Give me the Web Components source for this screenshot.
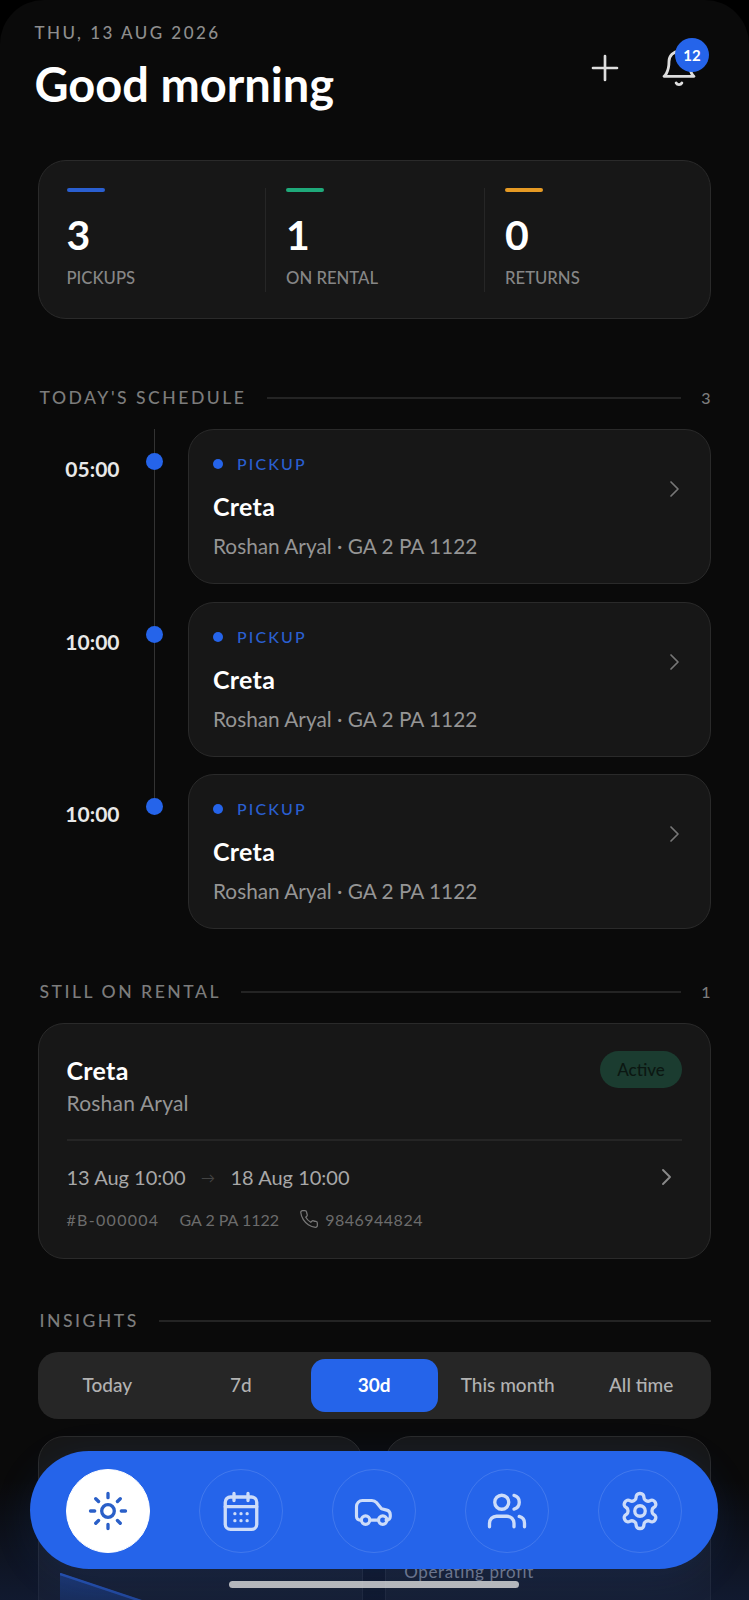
<!DOCTYPE html>
<html lang="en">
<head>
<meta charset="utf-8">
<title>Today</title>
<style>
  html, body { margin: 0; background: #000; }
  body { height: 1600px; overflow: hidden; font-family: Lato, "Noto Sans", sans-serif; }
</style>
</head>
<body>
<app-screen>
  <day-header date="THU, 13 AUG 2026" title="Good morning" count="12"></day-header>

  <stat-strip>
    <stat-item value="3" label="PICKUPS" color="#2a5fd0"></stat-item>
    <stat-item value="1" label="ON RENTAL" color="#1fa97a"></stat-item>
    <stat-item value="0" label="RETURNS" color="#e59a24"></stat-item>
  </stat-strip>

  <section-head class="first" count="3">TODAY'S SCHEDULE</section-head>
  <schedule-row time="05:00" car="Creta" detail="Roshan Aryal · GA 2 PA 1122"></schedule-row>
  <schedule-row time="10:00" car="Creta" detail="Roshan Aryal · GA 2 PA 1122"></schedule-row>
  <schedule-row time="10:00" car="Creta" detail="Roshan Aryal · GA 2 PA 1122" last></schedule-row>

  <section-head count="1">STILL ON RENTAL</section-head>
  <rental-card></rental-card>

  <section-head>INSIGHTS</section-head>
  <range-tabs>
    <range-tab>Today</range-tab>
    <range-tab>7d</range-tab>
    <range-tab active>30d</range-tab>
    <range-tab>This month</range-tab>
    <range-tab>All time</range-tab>
  </range-tabs>

  <insight-grid>
    <insight-card chart></insight-card>
    <insight-card label="Operating profit"></insight-card>
  </insight-grid>

  <bottom-nav slot="overlay">
    <nav-item icon="sun" active></nav-item>
    <nav-item icon="calendar"></nav-item>
    <nav-item icon="car"></nav-item>
    <nav-item icon="users"></nav-item>
    <nav-item icon="gear"></nav-item>
  </bottom-nav>
</app-screen>

<script>
const icons = {
  plus: '<path d="M12 3v18M3 12h18"/>',
  bell: '<path d="M6 8a6 6 0 0 1 12 0c0 7 3 9 3 9H3s3-2 3-9"/><path d="M10.3 21a1.94 1.94 0 0 0 3.4 0"/>',
  chevron: '<path d="M9 5l7 7-7 7"/>',
  phone: '<path d="M22 16.92v3a2 2 0 0 1-2.18 2 19.79 19.79 0 0 1-8.63-3.07 19.5 19.5 0 0 1-6-6 19.79 19.79 0 0 1-3.07-8.67A2 2 0 0 1 4.11 2h3a2 2 0 0 1 2 1.72 12.84 12.84 0 0 0 .7 2.81 2 2 0 0 1-.45 2.11L8.09 9.91a16 16 0 0 0 6 6l1.27-1.27a2 2 0 0 1 2.11-.45 12.84 12.84 0 0 0 2.81.7A2 2 0 0 1 22 16.92z"/>',
  sun: '<circle cx="12" cy="12" r="3.6"/><path d="M12 2v2.4M12 19.6V22M2 12h2.4M19.6 12H22M5 5l1.6 1.6M17.4 17.4L19 19M5 19l1.6-1.6M17.4 6.6L19 5"/>',
  calendar: '<rect x="3" y="4" width="18" height="18.5" rx="3"/><path d="M3 9.5h18M8 2v4M16 2v4"/><path d="M8.5 13.5h.01M12 13.5h.01M15.5 13.5h.01M8.5 17.5h.01M12 17.5h.01M15.5 17.5h.01"/>',
  car: '<path d="M4.6 17.2H4a2 2 0 0 1-2-2V9.4a3.4 3.4 0 0 1 3.4-3.4h5.4a3.4 3.4 0 0 1 2.6 1.2l2.9 3.5 3 .8a2.7 2.7 0 0 1 2 2.6v1.1a2 2 0 0 1-2 2h-.4"/><path d="M9.8 17.2h4.6"/><circle cx="7.2" cy="17.2" r="2.4"/><circle cx="17" cy="17.2" r="2.4"/>',
  users: '<path d="M16 21v-2a4 4 0 0 0-4-4H6a4 4 0 0 0-4 4v2"/><circle cx="9" cy="7" r="4"/><path d="M22 21v-2a4 4 0 0 0-3-3.87"/><path d="M16 3.13a4 4 0 0 1 0 7.75"/>',
  gear: '<path d="M12.22 2h-.44a2 2 0 0 0-2 2v.18a2 2 0 0 1-1 1.73l-.43.25a2 2 0 0 1-2 0l-.15-.08a2 2 0 0 0-2.73.73l-.22.38a2 2 0 0 0 .73 2.73l.15.1a2 2 0 0 1 1 1.72v.51a2 2 0 0 1-1 1.74l-.15.09a2 2 0 0 0-.73 2.73l.22.38a2 2 0 0 0 2.73.73l.15-.08a2 2 0 0 1 2 0l.43.25a2 2 0 0 1 1 1.73V20a2 2 0 0 0 2 2h.44a2 2 0 0 0 2-2v-.18a2 2 0 0 1 1-1.73l.43-.25a2 2 0 0 1 2 0l.15.08a2 2 0 0 0 2.73-.73l.22-.39a2 2 0 0 0-.73-2.73l-.15-.08a2 2 0 0 1-1-1.74v-.5a2 2 0 0 1 1-1.74l.15-.09a2 2 0 0 0 .73-2.73l-.22-.38a2 2 0 0 0-2.73-.73l-.15.08a2 2 0 0 1-2 0l-.43-.25a2 2 0 0 1-1-1.73V4a2 2 0 0 0-2-2z"/><circle cx="12" cy="12" r="3"/>',
};

// small base so each element only writes its own markup
class Base extends HTMLElement {
  constructor() {
    super();
    this.attachShadow({mode: 'open'});
  }
  connectedCallback() {
    this.render();
  }
  attr(name) {
    return this.getAttribute(name) || '';
  }
}

class UiIcon extends Base {
  render() {
    const size = this.attr('size') || 24;
    const sw = this.attr('stroke') || 2;
    this.shadowRoot.innerHTML = `
      <style>
        :host { display: inline-flex; flex: none; }
        svg { display: block; }
      </style>
      <svg width="${size}" height="${size}" viewBox="0 0 24 24" fill="none" stroke="currentColor"
        stroke-width="${sw}" stroke-linecap="round" stroke-linejoin="round">${icons[this.attr('name')]}</svg>`;
  }
}

class AppScreen extends Base {
  render() {
    this.shadowRoot.innerHTML = `
      <style>
        :host {
          display: block;
          position: relative;
          height: 1600px;
          overflow: hidden;
          background: #0a0a0a;
          border-radius: 44px 44px 0 0;
          box-sizing: border-box;
          padding: 0 38.5px 0 38px;
        }
        .glow {
          position: absolute;
          left: 0;
          right: 0;
          bottom: 0;
          height: 120px;
          pointer-events: none;
          background: linear-gradient(to bottom, rgba(10,10,10,0), rgba(22,38,78,.55));
        }
        .bar {
          position: absolute;
          left: 229px;
          top: 1581px;
          width: 290px;
          height: 7px;
          border-radius: 4px;
          background: rgba(225,225,225,.78);
        }
      </style>
      <slot></slot>
      <div class="glow"></div>
      <slot name="overlay"></slot>
      <div class="bar"></div>`;
  }
}

class DayHeader extends Base {
  render() {
    this.shadowRoot.innerHTML = `
      <style>
        :host {
          display: flex;
          justify-content: space-between;
          height: 112px;
          margin-left: -3.5px;
          padding-right: 11.5px;
        }
        .date { margin-top: 22px; font-size: 17px; line-height: 22px; letter-spacing: 2.45px; font-weight: 500; color: #8e8e8e; }
        h1 { margin: 12px 0 0; font-size: 47px; line-height: 56px; font-weight: 700; color: #fff; }
        .actions { display: flex; gap: 34px; margin-top: 48px; height: 40px; color: #dedede; }
        .btn { position: relative; width: 40px; height: 40px; display: flex; align-items: center; justify-content: center; }
        .badge {
          position: absolute;
          left: 16px;
          top: -10px;
          width: 34px;
          height: 34px;
          border-radius: 50%;
          background: #2564ea;
          color: #fff;
          font-size: 15px;
          font-weight: 700;
          line-height: 34px;
          text-align: center;
        }
      </style>
      <div>
        <div class="date">${this.attr('date')}</div>
        <h1>${this.attr('title')}</h1>
      </div>
      <div class="actions">
        <div class="btn"><ui-icon name="plus" size="32" stroke="2"></ui-icon></div>
        <div class="btn"><ui-icon name="bell" size="40" stroke="1.7"></ui-icon><span class="badge">${this.attr('count')}</span></div>
      </div>`;
  }
}

class StatStrip extends Base {
  render() {
    this.shadowRoot.innerHTML = `
      <style>
        :host {
          display: grid;
          grid-template-columns: 198.5px 219px 1fr;
          margin-top: 48px;
          padding: 27px 27px 26px 27.5px;
          height: 159px;
          box-sizing: border-box;
          background: #171717;
          border: 1px solid #2a2a2a;
          border-radius: 28px;
        }
      </style>
      <slot></slot>`;
  }
}

class StatItem extends Base {
  render() {
    this.shadowRoot.innerHTML = `
      <style>
        :host { display: block; }
        :host(:not(:first-child)) { border-left: 1px solid #262626; padding-left: 20px; }
        .bar { width: 38px; height: 3.5px; border-radius: 2px; background: ${this.attr('color')}; }
        .value { margin-top: 21px; font-size: 41px; line-height: 44px; font-weight: 700; color: #fff; }
        .label { margin-top: 11px; font-size: 16.7px; line-height: 20px; font-weight: 500; color: #868686; }
      </style>
      <div class="bar"></div>
      <div class="value">${this.attr('value')}</div>
      <div class="label">${this.attr('label')}</div>`;
  }
}

class SectionHead extends Base {
  render() {
    const count = this.attr('count');
    this.shadowRoot.innerHTML = `
      <style>
        :host {
          display: flex;
          align-items: center;
          gap: 20px;
          margin: 51px 0 20px 1.5px;
          font-size: 17.6px;
          line-height: 22px;
          letter-spacing: 2.5px;
          font-weight: 500;
          color: #7c7c7c;
        }
        :host(.first) { margin-top: 68px; }
        .line { flex: 1; height: 2px; background: #242424; }
        .count { font-size: 16px; letter-spacing: 0; }
      </style>
      <span><slot></slot></span>
      <span class="line"></span>
      ${count ? `<span class="count">${count}</span>` : ''}`;
  }
}

class ScheduleRow extends Base {
  render() {
    const tail = this.hasAttribute('last') ? '' : '<div class="fill"></div>';
    this.shadowRoot.innerHTML = `
      <style>
        :host { display: flex; }
        .time {
          width: 81.5px;
          padding-top: 27px;
          text-align: right;
          font-size: 21px;
          line-height: 26px;
          font-weight: 700;
          color: #e8e8e8;
        }
        .rail { width: 68.5px; padding-left: 1px; box-sizing: border-box; display: flex; flex-direction: column; align-items: center; }
        .stem { width: 1.5px; height: 24px; background: #333; }
        .dot { width: 17px; height: 17px; border-radius: 50%; background: #2564ea; flex: none; }
        .fill { width: 1.5px; flex: 1; background: #333; }
        .wrap { flex: 1; padding-bottom: 17.5px; }
        :host([last]) .wrap { padding-bottom: 1px; }
        .card {
          display: flex;
          height: 155px;
          box-sizing: border-box;
          padding: 23px 24px 0 24px;
          background: #171717;
          border: 1px solid #2a2a2a;
          border-radius: 26px;
        }
        .body { flex: 1; }
        .kind { display: flex; align-items: center; gap: 14px; font-size: 16px; line-height: 22px; letter-spacing: 2.1px; font-weight: 500; color: #2a5fd0; }
        .kind i { width: 10px; height: 10px; border-radius: 50%; background: #2564ea; }
        .car { margin-top: 16px; font-size: 25px; line-height: 30px; font-weight: 700; letter-spacing: .3px; color: #fff; }
        .detail { margin-top: 12px; font-size: 20.8px; line-height: 26px; color: #959595; }
        ui-icon { margin-top: 24px; color: #777; align-self: flex-start; }
      </style>
      <div class="time">${this.attr('time')}</div>
      <div class="rail"><div class="stem"></div><div class="dot"></div>${tail}</div>
      <div class="wrap">
        <div class="card">
          <div class="body">
            <div class="kind"><i></i>PICKUP</div>
            <div class="car">${this.attr('car')}</div>
            <div class="detail">${this.attr('detail')}</div>
          </div>
          <ui-icon name="chevron" size="24" stroke="1.7"></ui-icon>
        </div>
      </div>`;
  }
}

class RentalCard extends Base {
  render() {
    this.shadowRoot.innerHTML = `
      <style>
        :host {
          display: block;
          height: 236px;
          box-sizing: border-box;
          padding: 27px 27.5px 0;
          background: #171717;
          border: 1px solid #2a2a2a;
          border-radius: 26px;
        }
        .top { display: flex; justify-content: space-between; align-items: flex-start; }
        .car { margin-top: 3.5px; font-size: 25px; line-height: 30px; font-weight: 700; letter-spacing: .3px; color: #fff; }
        .who { margin-top: 5.5px; font-size: 21px; line-height: 26px; letter-spacing: .2px; color: #959595; }
        .pill {
          width: 82px;
          height: 37px;
          border-radius: 19px;
          background: #1b3c30;
          color: #0b1712;
          font-size: 17px;
          font-weight: 500;
          line-height: 37px;
          text-align: center;
        }
        hr { margin: 23px 0 0; border: 0; height: 2px; background: #252525; }
        .range { display: flex; align-items: center; margin-top: 22px; height: 28px; font-size: 20px; color: #a8a8a8; }
        .arrow { width: 45px; text-align: center; font-size: 14px; color: #444; }
        .range ui-icon { margin-left: auto; margin-right: 4px; color: #8a8a8a; }
        .meta { display: flex; align-items: center; margin-top: 17px; height: 22px; font-size: 16px; color: #6c6c6c; }
        .meta span { margin-right: 20px; }
        .meta .id { letter-spacing: 1.3px; }
        .meta .tel { margin: 0; letter-spacing: .5px; }
        .meta ui-icon { margin-right: 6px; color: #787878; }
      </style>
      <div class="top">
        <div>
          <div class="car">Creta</div>
          <div class="who">Roshan Aryal</div>
        </div>
        <div class="pill">Active</div>
      </div>
      <hr>
      <div class="range">
        <span>13 Aug 10:00</span><span class="arrow">→</span><span>18 Aug 10:00</span>
        <ui-icon name="chevron" size="24" stroke="1.9"></ui-icon>
      </div>
      <div class="meta">
        <span class="id">#B-000004</span><span>GA 2 PA 1122</span><ui-icon name="phone" size="20" stroke="1.5"></ui-icon><span class="tel">9846944824</span>
      </div>`;
  }
}

class RangeTabs extends Base {
  render() {
    this.shadowRoot.innerHTML = `
      <style>
        :host {
          display: grid;
          grid-template-columns: repeat(5, 1fr);
          gap: 6.8px;
          padding: 7px 6px;
          height: 67px;
          box-sizing: border-box;
          background: #262626;
          border-radius: 20px;
        }
      </style>
      <slot></slot>`;
  }
}

class RangeTab extends Base {
  render() {
    this.shadowRoot.innerHTML = `
      <style>
        :host {
          display: flex;
          align-items: center;
          justify-content: center;
          padding-bottom: 2px;
          box-sizing: border-box;
          border-radius: 14px;
          font-size: 19px;
          font-weight: 500;
          color: #b2b2b2;
        }
        :host([active]) { background: #2564ea; color: #fff; font-weight: 700; }
      </style>
      <slot></slot>`;
  }
}

class InsightGrid extends Base {
  render() {
    this.shadowRoot.innerHTML = `
      <style>
        :host { display: grid; grid-template-columns: 1fr 1fr; gap: 22px; margin-top: 17px; }
      </style>
      <slot></slot>`;
  }
}

class InsightCard extends Base {
  render() {
    const chart = this.hasAttribute('chart') ? `
      <svg width="300" height="90" viewBox="0 0 300 90">
        <defs>
          <linearGradient id="fill" x1="0" y1="0" x2="0" y2="1">
            <stop offset="0" stop-color="#2563e6" stop-opacity=".55"/>
            <stop offset="1" stop-color="#2563e6" stop-opacity=".1"/>
          </linearGradient>
        </defs>
        <path d="M0 0L300 100V100H0Z" fill="url(#fill)"/>
        <path d="M0 1L300 101" fill="none" stroke="#2f6cf0" stroke-width="2.5"/>
      </svg>` : '';
    this.shadowRoot.innerHTML = `
      <style>
        :host {
          display: block;
          height: 240px;
          box-sizing: border-box;
          padding: 124px 19px 0 18px;
          background: #171717;
          border: 1px solid #2a2a2a;
          border-radius: 26px;
          overflow: hidden;
        }
        :host([chart]) { padding: 136px 0 0 21px; }
        svg { display: block; }
        .label { font-size: 17px; line-height: 22px; letter-spacing: .6px; color: #b4b4b4; }
      </style>
      ${chart}
      ${this.attr('label') ? `<div class="label">${this.attr('label')}</div>` : ''}`;
  }
}

class BottomNav extends Base {
  render() {
    this.shadowRoot.innerHTML = `
      <style>
        :host {
          position: absolute;
          left: 30px;
          top: 1451px;
          width: 688px;
          height: 118px;
          box-sizing: border-box;
          padding: 2px 36px 0;
          display: flex;
          align-items: center;
          justify-content: space-between;
          border-radius: 59px;
          background: #2564ea;
          box-shadow: 0 8px 40px rgba(37,99,230,.12);
        }
      </style>
      <slot></slot>`;
  }
}

class NavItem extends Base {
  render() {
    const sw = this.attr('icon') === 'car' ? 1.8 : 1.9;
    this.shadowRoot.innerHTML = `
      <style>
        :host {
          width: 84px;
          height: 84px;
          box-sizing: border-box;
          border-radius: 50%;
          border: 1px solid rgba(255,255,255,.13);
          display: flex;
          align-items: center;
          justify-content: center;
          color: #cddcf9;
        }
        :host([active]) { background: #fff; border-color: #fff; color: #2a5fc8; }
      </style>
      <ui-icon name="${this.attr('icon')}" size="42" stroke="${sw}"></ui-icon>`;
  }
}

customElements.define('ui-icon', UiIcon);
customElements.define('app-screen', AppScreen);
customElements.define('day-header', DayHeader);
customElements.define('stat-strip', StatStrip);
customElements.define('stat-item', StatItem);
customElements.define('section-head', SectionHead);
customElements.define('schedule-row', ScheduleRow);
customElements.define('rental-card', RentalCard);
customElements.define('range-tabs', RangeTabs);
customElements.define('range-tab', RangeTab);
customElements.define('insight-grid', InsightGrid);
customElements.define('insight-card', InsightCard);
customElements.define('bottom-nav', BottomNav);
customElements.define('nav-item', NavItem);
</script>
</body>
</html>
